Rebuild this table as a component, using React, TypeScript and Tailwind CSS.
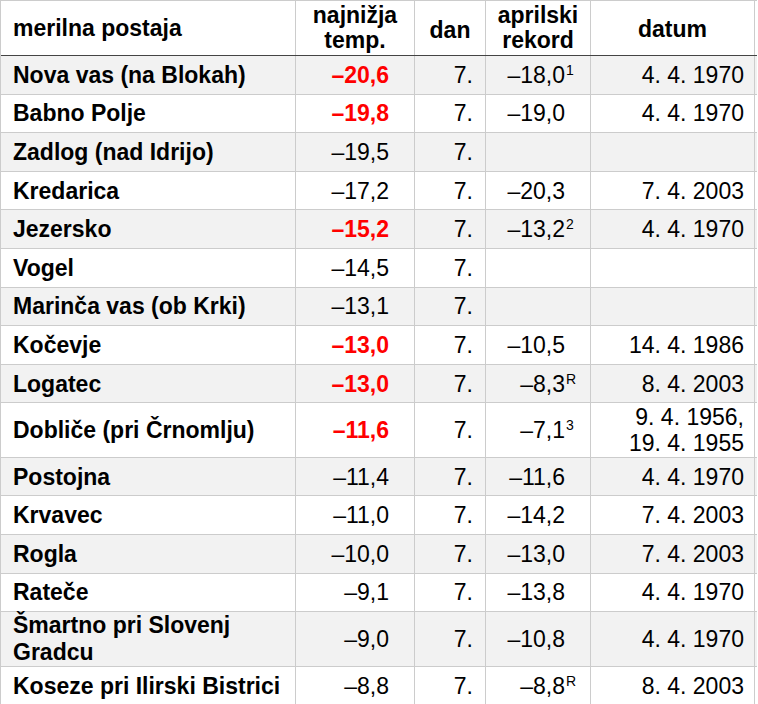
import React from "react";

type Row = {
  name: React.ReactNode;
  t: string;
  red?: boolean;
  rek: string;
  sup?: string;
  datum: string[];
  tall?: boolean;
};

const rows: Row[] = [
  { name: "Nova vas (na Blokah)", t: "–20,6", red: true, rek: "–18,0", sup: "1", datum: ["4. 4. 1970"] },
  { name: "Babno Polje", t: "–19,8", red: true, rek: "–19,0", datum: ["4. 4. 1970"] },
  { name: "Zadlog (nad Idrijo)", t: "–19,5", rek: "", datum: [] },
  { name: "Kredarica", t: "–17,2", rek: "–20,3", datum: ["7. 4. 2003"] },
  { name: "Jezersko", t: "–15,2", red: true, rek: "–13,2", sup: "2", datum: ["4. 4. 1970"] },
  { name: "Vogel", t: "–14,5", rek: "", datum: [] },
  { name: "Marinča vas (ob Krki)", t: "–13,1", rek: "", datum: [] },
  { name: "Kočevje", t: "–13,0", red: true, rek: "–10,5", datum: ["14. 4. 1986"] },
  { name: "Logatec", t: "–13,0", red: true, rek: "–8,3", sup: "R", datum: ["8. 4. 2003"] },
  { name: "Dobliče (pri Črnomlju)", t: "–11,6", red: true, rek: "–7,1", sup: "3", datum: ["9. 4. 1956,", "19. 4. 1955"], tall: true },
  { name: "Postojna", t: "–11,4", rek: "–11,6", datum: ["4. 4. 1970"] },
  { name: "Krvavec", t: "–11,0", rek: "–14,2", datum: ["7. 4. 2003"] },
  { name: "Rogla", t: "–10,0", rek: "–13,0", datum: ["7. 4. 2003"] },
  { name: "Rateče", t: "–9,1", rek: "–13,8", datum: ["4. 4. 1970"] },
  {
    name: (
      <>
        Šmartno pri Slovenj
        <br />
        Gradcu
      </>
    ),
    t: "–9,0",
    rek: "–10,8",
    datum: ["4. 4. 1970"],
    tall: true,
  },
  { name: "Koseze pri Ilirski Bistrici", t: "–8,8", rek: "–8,8", sup: "R", datum: ["8. 4. 2003"] },
];

const cols = "grid grid-cols-[295px_119px_71px_105px_164px]";

export default function App() {
  return (
    <div className="w-[758px] h-[704px] overflow-hidden bg-white text-black font-['Liberation_Sans',Arial,sans-serif] text-[23px]">
      <div className="w-[757px] border-t border-l border-[#cccccc]">
        <div className={`${cols} h-[55px] border-b border-[#444] font-bold leading-[25px]`}>
          <div className="flex items-center pl-[12px] border-r border-[#cccccc]">merilna postaja</div>
          <div className="flex items-center justify-center text-center border-r border-[#cccccc]">
            najnižja
            <br />
            temp.
          </div>
          <div className="flex items-center justify-center border-r border-[#cccccc] pt-[5px]">dan</div>
          <div className="flex items-center justify-center text-center border-r border-[#cccccc]">
            aprilski
            <br />
            rekord
          </div>
          <div className="flex items-center justify-center border-r border-[#cccccc] pt-[3px]">datum</div>
        </div>
        {rows.map((r, i) => (
          <div
            key={i}
            className={`${cols} border-b border-[#cccccc] ${i % 2 === 0 ? "bg-[#f2f2f2]" : "bg-white"} ${
              r.tall ? "h-[54.5px] leading-[26.5px]" : "h-[38.6px] leading-[26px]"
            }`}
          >
            <div className="flex items-center pl-[12px] pr-[2px] font-bold whitespace-nowrap border-r border-[#cccccc]">
              {r.name}
            </div>
            <div
              className={`flex items-center justify-end pr-[25px] border-r border-[#cccccc] ${
                r.red ? "text-[#ff0000] font-bold" : ""
              }`}
            >
              {r.t}
            </div>
            <div className="flex items-center justify-end pr-[12px] border-r border-[#cccccc]">7.</div>
            <div className="flex items-center justify-end pr-[25px] border-r border-[#cccccc]">
              {r.rek && (
                <span className="relative">
                  {r.rek}
                  {r.sup && (
                    <span className="absolute left-full ml-[1px] top-[1px] text-[14px] leading-none">{r.sup}</span>
                  )}
                </span>
              )}
            </div>
            <div className="flex flex-col items-end justify-center pr-[10px] border-r border-[#cccccc] text-right">
              {r.datum.map((d, k) => (
                <span key={k}>{d}</span>
              ))}
            </div>
          </div>
        ))}
      </div>
    </div>
  );
}
